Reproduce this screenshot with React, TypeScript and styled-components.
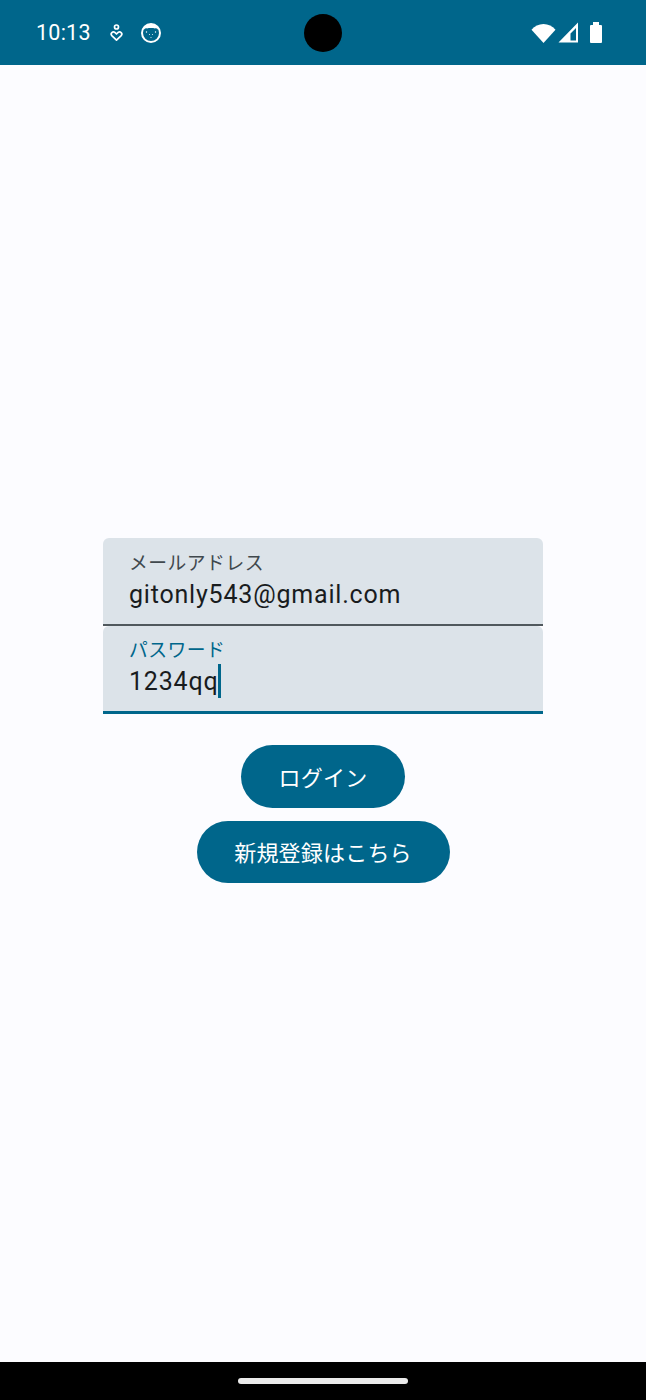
import React from "react";
import styled, { createGlobalStyle } from "styled-components";

const Global = createGlobalStyle`
  html, body { margin: 0; padding: 0; background: #fcfcff; }
  body { font-family: Roboto, "Noto Sans CJK JP", sans-serif; }
`;

const Screen = styled.div`
  width: 646px;
  height: 1400px;
  display: flex;
  flex-direction: column;
  background: #fcfcff;
  overflow: hidden;
`;

const StatusBar = styled.header`
  height: 65px;
  flex: none;
  background: #00668b;
  color: #fff;
  display: grid;
  grid-template-columns: 1fr 38px 1fr;
  align-items: center;
  padding: 0 36px;
  box-sizing: border-box;
`;

const StatusLeft = styled.div`
  display: flex;
  align-items: center;
  gap: 18px;
`;

const Clock = styled.span`
  font: 400 21.5px Roboto, sans-serif;
  letter-spacing: 0.25px;
  margin-right: 1px;
`;

const Camera = styled.div`
  width: 38px;
  height: 38px;
  border-radius: 50%;
  background: #000;
`;

const StatusRight = styled.div`
  display: flex;
  align-items: center;
  justify-content: flex-end;
  gap: 2px;
  margin-right: 8px;
`;

const Main = styled.main`
  flex: 1;
  display: flex;
  flex-direction: column;
  align-items: center;
  padding-top: 473px;
`;

const Field = styled.div<{ $focused?: boolean }>`
  width: 440px;
  height: 88px;
  box-sizing: border-box;
  background: #dce3e9;
  border-radius: 6px 6px 0 0;
  border-bottom: ${(p) => (p.$focused ? "3px solid #00668b" : "2px solid #50585d")};
  padding: 14px 26px 0;
`;

const Label = styled.div<{ $focused?: boolean }>`
  font: 400 18.8px/22px Roboto, "Noto Sans CJK JP", sans-serif;
  letter-spacing: 0.5px;
  color: ${(p) => (p.$focused ? "#00668b" : "#40484d")};
  margin-top: ${(p) => (p.$focused ? 0 : 1)}px;
  margin-bottom: ${(p) => (p.$focused ? 1 : 0)}px;
`;

const Value = styled.div`
  font: 400 25px/34px Roboto, sans-serif;
  letter-spacing: 0.8px;
  color: #191c1e;
  margin-top: 3px;
  display: flex;
  align-items: center;
`;

const Caret = styled.span`
  display: inline-block;
  width: 3px;
  height: 34px;
  margin-top: -3px;
  background: #00668b;
`;

const PrimaryButton = styled.button<{ $width: number; $top: number; $height: number }>`
  width: ${(p) => p.$width}px;
  height: ${(p) => p.$height}px;
  margin-top: ${(p) => p.$top}px;
  border: 0;
  padding: 0 0 2px;
  border-radius: 32px;
  background: #00668b;
  color: #fff;
  font: 400 22px Roboto, "Noto Sans CJK JP", sans-serif;
  letter-spacing: 0.2px;
  flex: none;
`;

const NavBar = styled.footer`
  height: 38px;
  flex: none;
  background: #000;
  display: flex;
  justify-content: center;
  padding-top: 16px;
  box-sizing: border-box;
`;

const Handle = styled.div`
  width: 170px;
  height: 6px;
  border-radius: 3px;
  background: #ebebeb;
`;

const HeartPerson = () => (
  <svg width="13" height="18" viewBox="0 0 13 18" fill="none" stroke="#fff" strokeWidth="1.7">
    <circle cx="6.5" cy="3" r="2" />
    <path d="M6.500 16.200 1.800 11.600C-.1 9.400 2.900 6.700 4.800 8.400L6.500 10 8.200 8.400C10.100 6.700 13.100 9.400 11.200 11.600Z" strokeLinejoin="round" />
  </svg>
);

const CatFace = () => (
  <svg width="20" height="20" viewBox="0 0 20 20">
    <circle cx="10" cy="10" r="9" fill="none" stroke="#fff" strokeWidth="2" />
    <path d="M2.500 7C4 2.500 7 1 10 1S16 2.500 17.500 7C16 5.500 15 4.800 14 5.400 12 4.800 8 4.800 6 5.400 5 4.800 4 5.500 2.500 7Z" fill="#fff" />
    <circle cx="5.500" cy="9" r="0.7" fill="#fff" />
    <circle cx="14.500" cy="9" r="0.7" fill="#fff" />
    <circle cx="8.500" cy="11.500" r="0.5" fill="#fff" />
    <circle cx="11.500" cy="11.500" r="0.5" fill="#fff" />
    <circle cx="10" cy="14.500" r="0.5" fill="#fff" />
  </svg>
);

const Wifi = () => (
  <svg width="25" height="20" viewBox="0 0 25 20">
    <path d="M0.500 6.800C3.700 3.200 7.800 1 12.500 1S21.300 3.200 24.500 6.800L12.500 20Z" fill="#fff" />
  </svg>
);

const Signal = () => (
  <svg width="21" height="21" viewBox="0 0 21 21">
    <path d="M0.500 20.500 20 0.500V20.500ZM12.500 18.500H18V6L12.500 11.500Z" fill="#fff" fillRule="evenodd" />
  </svg>
);

const Battery = styled.span`
  position: relative;
  width: 12px;
  height: 18px;
  margin: 3px 0 0 9px;
  border-radius: 1px;
  background: #fff;
  &::before {
    content: "";
    position: absolute;
    left: 3px;
    top: -3px;
    width: 6px;
    height: 3px;
    background: #fff;
  }
`;

export default function App() {
  return (
    <Screen>
      <Global />
      <StatusBar>
        <StatusLeft>
          <Clock>10:13</Clock>
          <HeartPerson />
          <CatFace />
        </StatusLeft>
        <Camera />
        <StatusRight>
          <Wifi />
          <Signal />
          <Battery />
        </StatusRight>
      </StatusBar>
      <Main>
        <Field>
          <Label>メールアドレス</Label>
          <Value>gitonly543@gmail.com</Value>
        </Field>
        <Field $focused>
          <Label $focused>パスワード</Label>
          <Value>
            1234qq
            <Caret />
          </Value>
        </Field>
        <PrimaryButton $width={164} $height={63} $top={31}>ログイン</PrimaryButton>
        <PrimaryButton $width={253} $height={62} $top={13}>新規登録はこちら</PrimaryButton>
      </Main>
      <NavBar>
        <Handle />
      </NavBar>
    </Screen>
  );
}
